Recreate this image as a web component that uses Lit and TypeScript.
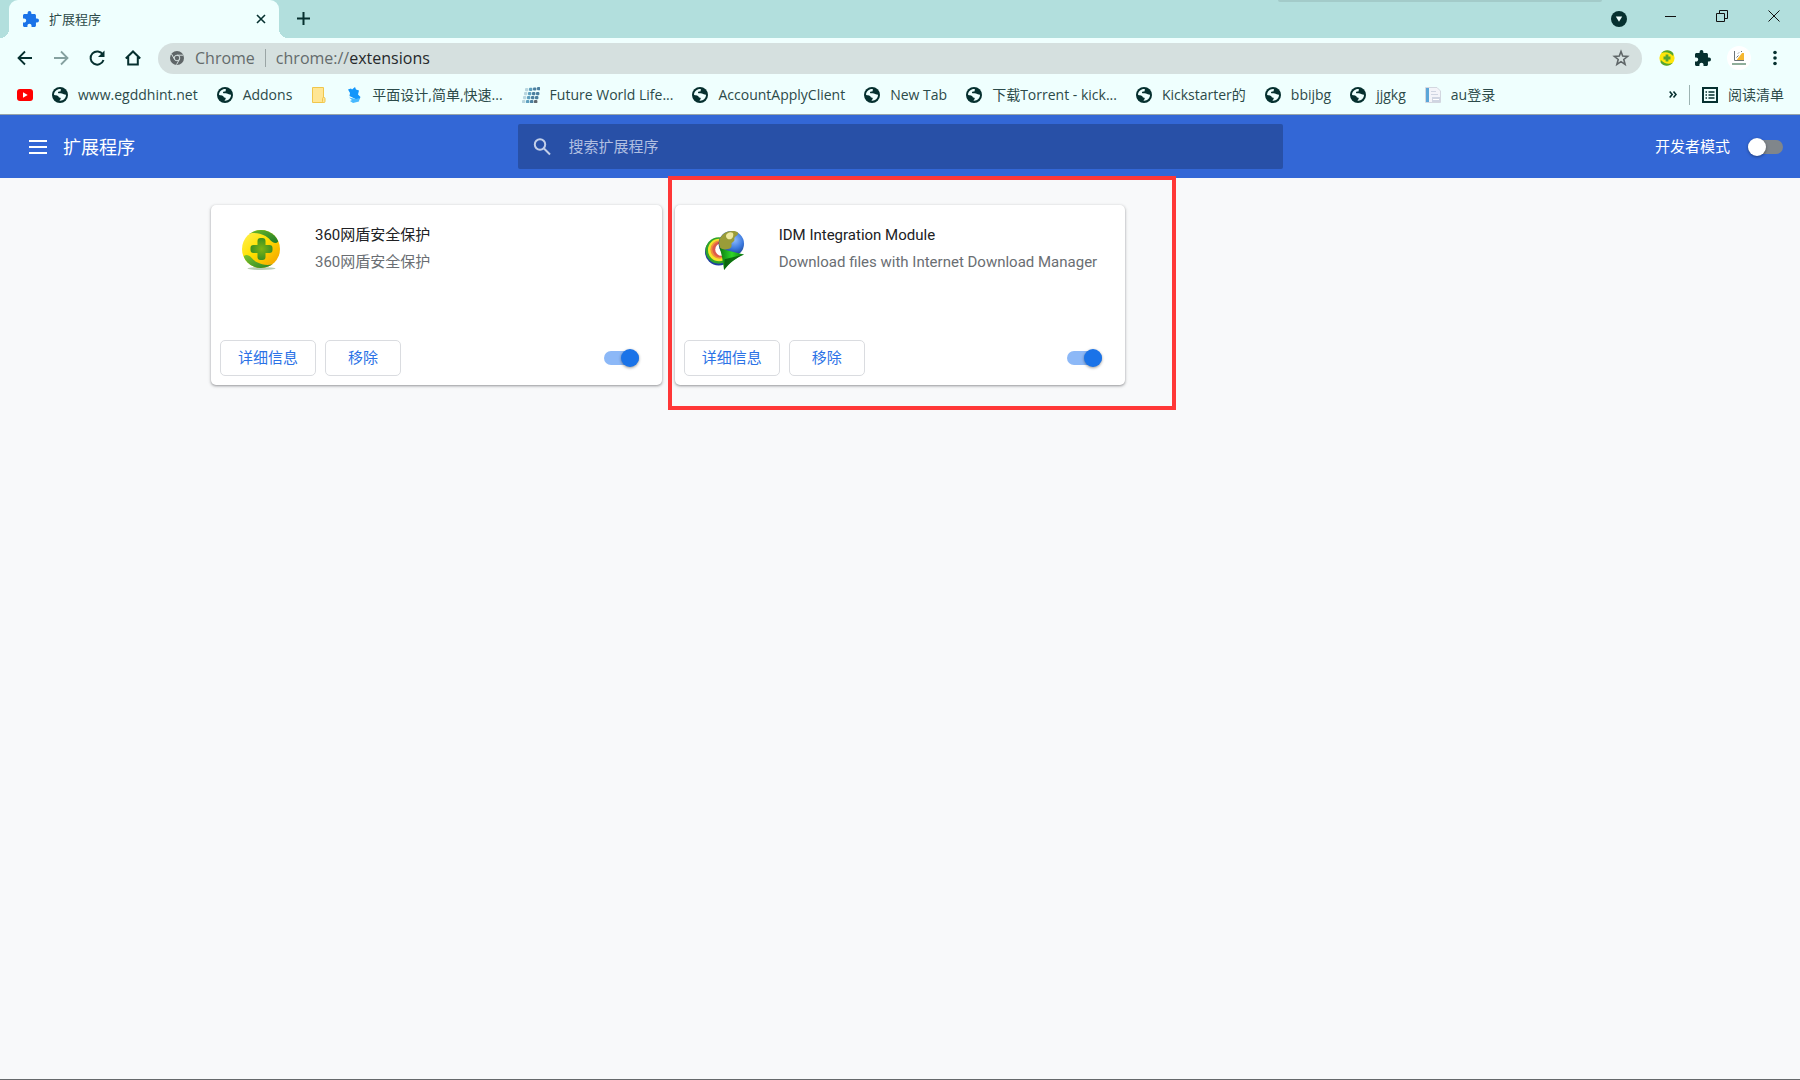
import { LitElement, html, css, svg, nothing, type TemplateResult } from "lit";
import { customElement, property } from "lit/decorators.js";

/* ---------- icons ---------- */

const puzzle = html`<svg class="icon" viewBox="2 1 21 21" aria-hidden="true">
  <path fill="currentColor" d="M20.5 11H19V7c0-1.1-.9-2-2-2h-4V3.5a2.5 2.5 0 0 0-5 0V5H4c-1.1 0-1.99.9-1.99 2v3.8H3.5c1.49 0 2.7 1.21 2.7 2.7s-1.21 2.7-2.7 2.7H2V20c0 1.100.9 2 2 2h3.8v-1.500c0-1.490 1.210-2.700 2.700-2.700s2.700 1.210 2.700 2.700V22H17c1.100 0 2-.9 2-2v-4h1.500a2.500 2.500 0 0 0 0-5z"/>
</svg>`;

const globe = html`<svg class="icon" viewBox="0 0 16 16" aria-hidden="true">
  <circle cx="8" cy="8" r="8" fill="#06302f"/>
  <path fill="#effffe" d="M8.600 2C5 1.800 2.100 4.500 2 7.700c1.300.9 2.700.5 4 1.200.9.500.5 1.600 1.700 1.700 1 .1 1.200.6.900 1.400-.2.700-1 .8-1 1.700 3.600.3 6.300-2.300 6.400-5.600-.8-.9-1.900-.4-2.900-1-.7-.5-1.400-.9-2.500-.9-1.300-.1-2.300.3-2.600-.5-.2-.8.8-1.100 1.700-1.100 1 0 .9-.6 1-1.200.1-.5.500-.7-.1-1.400z"/>
</svg>`;

const youtube = html`<svg class="icon" viewBox="0 0 16 16" aria-hidden="true">
  <rect y="2" width="16" height="12" rx="3" fill="#f00"/>
  <path fill="#fff" d="M6 5.300 10.700 8 6 10.700z"/>
</svg>`;

const folder = html`<svg class="icon" viewBox="0 0 16 16" aria-hidden="true">
  <path fill="#ffe694" stroke="#f0c64c" d="M1.500.5h11v15h-11z"/>
  <rect x="11.500" y="10.500" width="2.500" height="5" rx="1" fill="#ffe694" stroke="#f0c64c"/>
</svg>`;

const bluebird = html`<svg class="icon" viewBox="0 0 16 16" aria-hidden="true">
  <path fill="#1296fb" d="M2 2.500 5 1.500l1 1L9 0l1 2.500 3 1-1 4 2.500 2.500-1.500 3-3.500-1L3.500 9 4 6z"/>
  <path fill="#48b9ff" d="M3 10.500 10 12l3.500-1-.5 3.500L7 16l-3-2 2-1z"/>
</svg>`;

const dotColours = ["#b9d6df", "#5e9fbe", "#4c7f9f", "#61686f"];
const dots = html`<svg class="icon wide" viewBox="0 0 18 16" aria-hidden="true">
  ${[0, 1, 2, 3].map((row) =>
    [0, 1, 2, 3].map((col) => svg`<rect
      x=${3 - row + col * 4} y=${1 + row * 4 - (row === 0 ? col * 0.3 : 0)}
      width="3.400" height="3.200" rx="1"
      fill=${dotColours[row === 3 && col === 3 ? 3 : Math.min(col, row === 3 ? 3 : 2)]}/>`))}
</svg>`;

const page = html`<svg class="icon" viewBox="0 0 16 16" aria-hidden="true">
  <path fill="#f3f4f9" stroke="#d3d7e0" d="M.5.5H12l3.500 3.500v11.500H.5z"/>
  <path fill="#5ba6d8" d="M1 1h3v14H1z"/>
  <path fill="#cfd5e2" d="M6 4h5v1H6zM6 7h7v1H6zM7 10h8v5H7z"/>
  <path fill="#fff" d="M8 12h6v1H8z"/>
</svg>`;

const shieldFlat = html`<svg class="icon" viewBox="0 0 16 16" aria-hidden="true">
  <circle cx="8" cy="8" r="7.600" fill="#ffe60a"/>
  <path fill="#56a52f" d="M2.200 3.200C5.500-.9 11.500-.8 14.400 3.500l-.3 2.500C11.200 2.500 6.500 1.200 2.200 3.200zM13.800 12.800C10.500 16.900 4.500 16.800 1.600 12.500L1.900 10c2.900 3.500 7.600 4.800 11.900 2.800zM6.600 4.500h2.800v2.100h2.100v2.800H9.400v2.100H6.600V9.400H4.500V6.600h2.100z"/>
</svg>`;

const shieldLarge = html`<svg viewBox="0 0 40 42" aria-hidden="true">
  <defs>
    <linearGradient id="sun" x1="0" y1="0" x2="1" y2="1">
      <stop offset="0" stop-color="#fff35a"/><stop offset=".45" stop-color="#ffe000"/><stop offset="1" stop-color="#f39a00"/>
    </linearGradient>
    <linearGradient id="leaf" x1="0" y1="0" x2="1" y2="1">
      <stop offset="0" stop-color="#7cc42c"/><stop offset="1" stop-color="#1c7a26"/>
    </linearGradient>
    <radialGradient id="plus"><stop offset="0" stop-color="#7fb414"/><stop offset="1" stop-color="#3a8f22"/></radialGradient>
    <clipPath id="disc"><circle cx="19.500" cy="20" r="19"/></clipPath>
  </defs>
  <ellipse cx="20" cy="39.500" rx="14" ry="1.500" fill="#b9cdb5"/>
  <circle cx="19.500" cy="20" r="19" fill="url(#sun)"/>
  <g clip-path="url(#disc)" fill="url(#leaf)">
    <path d="M4 6C10-4 30-4 36 7c2 4 1 7-2 7-4 0-5-4-10-7C17 3.500 11 3 4 6z"/>
    <path d="M35 34C29 44 9 44 3 33c-2-4-1-7 2-7 4 0 5 4 10 7 7 3.500 13 4 20 1z"/>
  </g>
  <g fill="url(#plus)">
    <path d="M19 9h2a3 3 0 0 1 3 3v4h4a3 3 0 0 1 3 3v2a3 3 0 0 1-3 3h-4v4a3 3 0 0 1-3 3h-2a3 3 0 0 1-3-3v-4h-4a3 3 0 0 1-3-3v-2a3 3 0 0 1 3-3h4v-4a3 3 0 0 1 3-3z"/>
  </g>
</svg>`;

const idm = html`<svg viewBox="0 0 42 42" aria-hidden="true">
  <defs>
    <radialGradient id="ball" cx=".62" cy=".35" r=".7">
      <stop offset="0" stop-color="#8fbcff"/><stop offset=".5" stop-color="#3a78dd"/><stop offset="1" stop-color="#12306f"/>
    </radialGradient>
    <linearGradient id="arrow" x1="0" y1="0" x2="1" y2="0">
      <stop offset="0" stop-color="#0a7a10"/><stop offset=".5" stop-color="#2fd62a"/><stop offset="1" stop-color="#0a7a10"/>
    </linearGradient>
  </defs>
  <circle cx="14" cy="23" r="14" fill="#1f3f9e"/>
  <circle cx="14" cy="21.500" r="13.500" fill="#2fa52a"/>
  <circle cx="14.500" cy="21" r="11.500" fill="#f2e62a"/>
  <circle cx="15" cy="20.500" r="9.500" fill="#f0913c"/>
  <circle cx="15.500" cy="20.500" r="8" fill="#dd5a4c"/>
  <circle cx="17" cy="20.500" r="6.500" fill="#fff"/>
  <circle cx="27" cy="14.500" r="13" fill="url(#ball)"/>
  <path fill="#9a9c38" d="M15 10c2-5 7-8.500 13-8.500 3 0 5 .5 6 2 0 3-4 3-4 6 1 3-2 3-3 5 1 3-1 5-2 5-3 1-7 2-9 0-2-3-2-6-1-9.500z"/>
  <path fill="#eee9a0" d="M23 4c3-2 6-1 6 1s-1 5-4 5-5-4-2-6z"/>
  <path fill="url(#arrow)" d="M15 19c8 3 16 4.500 25 6.500C32 29 25 34 19.500 41.500 18.500 34 17.500 26 15 19z"/>
  <path fill="#064f0a" d="m19.500 41.500.5-11 20-5C32 29 25 34 19.500 41.500z" opacity=".75"/>
</svg>`;

/* ---------- data ---------- */

interface Bookmark { icon: TemplateResult; text?: string; name: string }

const bookmarks: Bookmark[] = [
  { icon: youtube, name: "YouTube" },
  { icon: globe, name: "www.egddhint.net", text: "www.egddhint.net" },
  { icon: globe, name: "Addons", text: "Addons" },
  { icon: folder, name: "Folder" },
  { icon: bluebird, name: "平面设计", text: "平面设计,简单,快速..." },
  { icon: dots, name: "Future World Life", text: "Future World Life..." },
  { icon: globe, name: "AccountApplyClient", text: "AccountApplyClient" },
  { icon: globe, name: "New Tab", text: "New Tab" },
  { icon: globe, name: "下载Torrent", text: "下载Torrent - kick..." },
  { icon: globe, name: "Kickstarter的", text: "Kickstarter的" },
  { icon: globe, name: "bbijbg", text: "bbijbg" },
  { icon: globe, name: "jjgkg", text: "jjgkg" },
  { icon: page, name: "au登录", text: "au登录" },
];

const reset = css`
  *, *::before, *::after { box-sizing: border-box; }
  button { margin: 0; padding: 0; border: 0; background: none; color: inherit; font: inherit; cursor: pointer; }
  a { color: inherit; text-decoration: none; }
  input { margin: 0; padding: 0; border: 0; font: inherit; color: inherit; background: none; outline: none; }
  svg { display: block; flex: none; }
`;

const toggleStyles = css`
  .toggle {
    position: relative; flex: none; width: 35px; height: 14px;
    appearance: none; border-radius: 7px; background: #80868b; cursor: pointer;
  }
  .toggle::before {
    content: ""; position: absolute; left: 0; top: -2px; width: 18px; height: 18px;
    border-radius: 50%; background: #fff; box-shadow: 0 1px 3px rgba(0, 0, 0, .4);
  }
  .toggle:checked { background: #8cb8f7; }
  .toggle:checked::before { left: auto; right: 0; background: #1a73e8; }
`;

/* ---------- extension card ---------- */

@customElement("extension-card")
export class ExtensionCard extends LitElement {
  @property() name = "";
  @property() description = "";
  @property({ attribute: false }) icon?: TemplateResult;
  @property({ type: Boolean }) marked = false;

  static styles = [reset, toggleStyles, css`
    :host { display: block; position: relative; }
    .card {
      display: flex; flex-direction: column; min-height: 180px; border-radius: 5px; background: #fff;
      box-shadow: 0 1px 2px rgba(60, 64, 67, .35), 0 1px 3px 1px rgba(60, 64, 67, .16);
    }
    .summary { display: flex; flex: 1; gap: 33px; padding: 17px 16px 0 30px; }
    .picture { width: 41px; height: 42px; margin-top: 7px; flex: none; }
    .picture svg { width: 100%; height: 100%; }
    .name, .description { margin: 0; font-size: 15px; font-weight: 400; line-height: 27px; }
    .name { color: #202124; }
    .description { color: #6a6e73; }
    .actions { display: flex; align-items: center; gap: 9px; padding: 0 23px 9px 9px; }
    .action {
      height: 36px; padding: 0 17px; border: 1px solid #dadce0; border-radius: 5px;
      color: #2b72e6; font-size: 15px; line-height: 20px;
    }
    .remove { padding: 0 22px; }
    .toggle { margin-left: auto; }
    .marker { position: absolute; inset: -29px -51px -25px -7px; border: 4px solid #ff3737; pointer-events: none; z-index: 2; }
  `];

  render() {
    return html`
      <article class="card">
        <div class="summary">
          <div class="picture">${this.icon}</div>
          <div>
            <h2 class="name">${this.name}</h2>
            <p class="description">${this.description}</p>
          </div>
        </div>
        <div class="actions">
          <button class="action">详细信息</button>
          <button class="action remove">移除</button>
          <input class="toggle" type="checkbox" role="switch" aria-label=${this.name} checked>
        </div>
      </article>
      ${this.marked ? html`<div class="marker"></div>` : nothing}
    `;
  }
}

/* ---------- browser window ---------- */

@customElement("app-root")
export class AppRoot extends LitElement {
  static styles = [reset, toggleStyles, css`
    :host {
      display: flex; flex-direction: column; min-height: 100vh; background: #f8f9fa; box-sizing: border-box;
      border-bottom: 1px solid #66696b; overflow: hidden;
      font-family: Roboto, "Noto Sans CJK SC", sans-serif; font-size: 15px; line-height: 20px;
    }
    .chrome { position: relative; color: #06302f; font-family: "Open Sans", "Noto Sans CJK SC", sans-serif; background: #effffe; }
    .icon { width: 16px; height: 16px; }
    .wide { width: 18px; }

    .tabs { display: flex; height: 38px; padding: 0 17px 0 9px; background: #b2dfdd; }
    .tab {
      position: relative; display: flex; align-items: center; gap: 10px; width: 270px; padding: 0 12px 0 14px;
      border-radius: 9px 9px 0 0; background: #effffe; font-size: 13px; color: #2c4a49;
    }
    .tab::before, .tab::after { content: ""; position: absolute; bottom: 0; width: 9px; height: 9px; }
    .tab::before { right: 100%; background: radial-gradient(circle at 0 0, transparent 9px, #effffe 9px); }
    .tab::after { left: 100%; background: radial-gradient(circle at 100% 0, transparent 9px, #effffe 9px); }
    .tab-icon { color: #1a73e8; }
    .tab-title { flex: 1; }
    .tab-close { color: #06302f; }
    .tab-new { margin-left: 17px; padding-bottom: 1px; }
    .window { display: flex; align-items: center; margin-left: auto; gap: 34px; padding-bottom: 6px; color: #111; }
    .window-edge {
      position: absolute; top: 0; left: 71%; width: 18%; height: 2px; background: #a3cbc9; border-radius: 0 0 2px 2px;
    }

    .bar { display: flex; align-items: center; height: 40px; padding: 0 17px 0 15px; gap: 15px; }
    .nav { display: flex; gap: 16px; }
    .nav svg { width: 20px; height: 20px; }
    .dim { opacity: .45; }
    .address {
      display: flex; flex: 1; align-items: center; height: 31px; padding: 0 12px; border-radius: 16px;
      background: #d5e0df; color: #646b6c; font-size: 16px; line-height: 22px;
    }
    .origin { padding: 0 10px 0 11px; border-right: 1px solid #9aa5a5; line-height: 18px; margin-right: 10px; }
    .url { flex: 1; min-width: 0; color: #26292b; }
    .tools { display: flex; align-items: center; gap: 20px; margin-left: 2px; }
    .avatar { margin: 0 -4px; }

    .bookmarks { display: flex; align-items: center; height: 37px; padding: 0 16px 3px 17px; font-size: 14px; border-bottom: 1px solid #98a4a8; }
    .links { display: flex; flex: 1; min-width: 0; gap: 19px; }
    .bookmark { display: flex; align-items: center; gap: 10px; white-space: nowrap; color: #2c4a49; }
    .reading { display: flex; align-items: center; gap: 10px; margin-left: 12px; padding-left: 12px; border-left: 1px solid #9cb3b2; color: #2c4a49; font-size: 14px; }

    .header { display: grid; grid-template-columns: 1fr minmax(0, 765px) 1fr; align-items: center; min-height: 63px; padding: 0 17px 0 27px; background: #3367d6; color: #fff; }
    .brand { display: flex; align-items: center; gap: 14px; }
    .title { margin: 0; padding-top: 2px; font-size: 18px; font-weight: 400; line-height: 24px; }
    .search { display: flex; align-items: center; gap: 16px; height: 45px; margin-left: -5px; margin-right: 5px; padding: 0 15px; border-radius: 2px; background: #2850a7; color: #c3cfe9; }
    .query { flex: 1; min-width: 0; height: 100%; }
    .query::placeholder { color: #b0bfe1; opacity: 1; }
    .developer { display: flex; justify-content: flex-end; align-items: center; gap: 18px; }

    .content { flex: 1; padding: 27px 16px; }
    .grid { display: grid; grid-template-columns: repeat(3, 1fr); gap: 13px; max-width: 1378px; margin: 0 auto; }
  `];

  private renderTabs() {
    return html`
      <div class="tabs">
        <div class="tab">
          <span class="tab-icon">${puzzle}</span>
          <span class="tab-title">扩展程序</span>
          <button class="tab-close" aria-label="关闭">
            <svg width="12" height="12" viewBox="0 0 12 12" stroke="currentColor" stroke-width="1.600"><path d="m2 2 8 8m0-8-8 8"/></svg>
          </button>
        </div>
        <button class="tab-new" aria-label="新标签页">
          <svg width="15" height="15" viewBox="0 0 15 15" stroke="currentColor" stroke-width="2"><path d="M7.500 1v13M1 7.500h13"/></svg>
        </button>
        <div class="window">
          <button aria-label="搜索标签页">
            <svg width="16" height="22" viewBox="0 0 16 22"><circle cx="8" cy="14" r="8" fill="#06302f"/><path fill="#effffe" d="M4.800 11.500h6.400L8 16.700z"/></svg>
          </button>
          <button aria-label="最小化">
            <svg width="18" height="18" viewBox="0 0 18 18" stroke="currentColor" fill="none"><path d="M4 9.500h11"/></svg>
          </button>
          <button aria-label="还原">
            <svg width="18" height="18" viewBox="0 0 18 18" stroke="currentColor" fill="none"><path d="M3.500 6.500h8v8h-8zM6.500 6V3.500h8v8H12"/></svg>
          </button>
          <button aria-label="关闭窗口">
            <svg width="18" height="18" viewBox="0 0 18 18" stroke="currentColor" fill="none"><path d="m3.500 3.500 11 11m0-11-11 11"/></svg>
          </button>
        </div>
        <span class="window-edge"></span>
      </div>`;
  }

  private renderToolbar() {
    return html`
      <div class="bar">
        <div class="nav">
          <button aria-label="后退"><svg viewBox="0 0 20 20" fill="none" stroke="currentColor" stroke-width="1.800"><path d="M17 10H4M10 3.500 3.500 10l6.500 6.500"/></svg></button>
          <button class="dim" aria-label="前进"><svg viewBox="0 0 20 20" fill="none" stroke="currentColor" stroke-width="1.800"><path d="M3 10h13M10 3.500l6.500 6.500-6.500 6.500"/></svg></button>
          <button aria-label="重新加载"><svg viewBox="0 0 20 20" fill="none" stroke="currentColor" stroke-width="2"><path d="M15.800 6.500A6.600 6.600 0 1 0 16.500 12"/><path fill="currentColor" stroke="none" d="M17.500 2.500V9h-6.500z"/></svg></button>
          <button aria-label="主页"><svg viewBox="0 0 20 20" fill="none" stroke="currentColor" stroke-width="2"><path d="M2.800 10.500 10 3.500l7.200 7M5.200 9v7.500h9.600V9"/></svg></button>
        </div>
        <div class="address">
          <svg width="14" height="14" viewBox="0 0 14 14" fill="#5f6668"><circle cx="7" cy="7" r="7"/><g stroke="#d5e0df" fill="none"><circle cx="7" cy="7" r="2.800"/><path d="M7 4.200h6.200M4.600 8.400 1.500 3M9.400 8.400 6.500 13.700"/></g></svg>
          <span class="origin">Chrome</span>
          <label for="url">chrome://</label>
          <input id="url" class="url" type="text" value="extensions">
          <button aria-label="收藏">
            <svg width="18" height="18" viewBox="0 0 18 18" fill="none" stroke="#5f6668" stroke-width="1.600"><path d="m9 2.500 1.700 4.600 4.900.3-3.800 3.100 1.300 4.800L9 12.600l-4.100 2.700 1.300-4.800-3.800-3.100 4.900-.3z"/></svg>
          </button>
        </div>
        <div class="tools">
          <button aria-label="360网盾">${shieldFlat}</button>
          <button aria-label="扩展程序">${puzzle}</button>
          <button class="avatar" aria-label="个人资料">
            <svg width="24" height="24" viewBox="0 0 24 24"><circle cx="12" cy="12" r="12" fill="#fff"/><path fill="#f5b731" d="M10 13.500 15 7h2v7h-7z"/><path fill="none" stroke="#6c7478" d="M7.500 5v9.500H17M9.500 11.500l2-2M11 7.500l1-1M14 6l1-1"/><path fill="#8fae9b" d="M5 17h14v2H5z"/></svg>
          </button>
          <button aria-label="菜单">
            <svg width="16" height="16" viewBox="0 0 16 16" fill="currentColor"><circle cx="8" cy="2.500" r="1.800"/><circle cx="8" cy="8" r="1.800"/><circle cx="8" cy="13.500" r="1.800"/></svg>
          </button>
        </div>
      </div>`;
  }

  private renderBookmarks() {
    return html`
      <nav class="bookmarks">
        <div class="links">
          ${bookmarks.map((b) => html`<a class="bookmark" href="#" aria-label=${b.name}>${b.icon}${b.text ? html`<span>${b.text}</span>` : nothing}</a>`)}
        </div>
        <button aria-label="更多书签">
          <svg width="8" height="16" viewBox="0 0 8 16" fill="none" stroke="currentColor" stroke-width="1.600"><path d="m.7 4.500 2.500 3-2.500 3M4.500 4.500l2.500 3-2.500 3"/></svg>
        </button>
        <button class="reading">
          <svg class="icon" viewBox="0 0 16 16" fill="none" stroke="#06302f" stroke-width="2"><path d="M1 1h14v14H1z"/><path stroke-width="1.500" d="M3.500 5H5M6.500 5h6M3.500 8H5M6.500 8h6M3.500 11H5M6.500 11h6"/></svg>
          <span>阅读清单</span>
        </button>
      </nav>`;
  }

  render() {
    return html`
      <div class="chrome">${this.renderTabs()}${this.renderToolbar()}${this.renderBookmarks()}</div>
      <header class="header">
        <div class="brand">
          <button aria-label="主菜单">
            <svg width="22" height="18" viewBox="0 0 22 18" fill="currentColor"><path d="M2 2h18v2H2zM2 8h18v2H2zM2 14h18v2H2z"/></svg>
          </button>
          <h1 class="title">扩展程序</h1>
        </div>
        <label class="search">
          <svg width="20" height="20" viewBox="0 0 20 20" fill="none" stroke="currentColor" stroke-width="2"><circle cx="7" cy="7.500" r="5.200"/><path d="m11 11.500 6 6"/></svg>
          <input class="query" type="search" placeholder="搜索扩展程序" aria-label="搜索扩展程序">
        </label>
        <div class="developer">
          <label for="developer">开发者模式</label>
          <input id="developer" class="toggle" type="checkbox" role="switch">
        </div>
      </header>
      <main class="content">
        <div class="grid">
          <extension-card name="360网盾安全保护" description="360网盾安全保护" .icon=${shieldLarge}></extension-card>
          <extension-card name="IDM Integration Module" description="Download files with Internet Download Manager" .icon=${idm} marked></extension-card>
        </div>
      </main>
    `;
  }
}
